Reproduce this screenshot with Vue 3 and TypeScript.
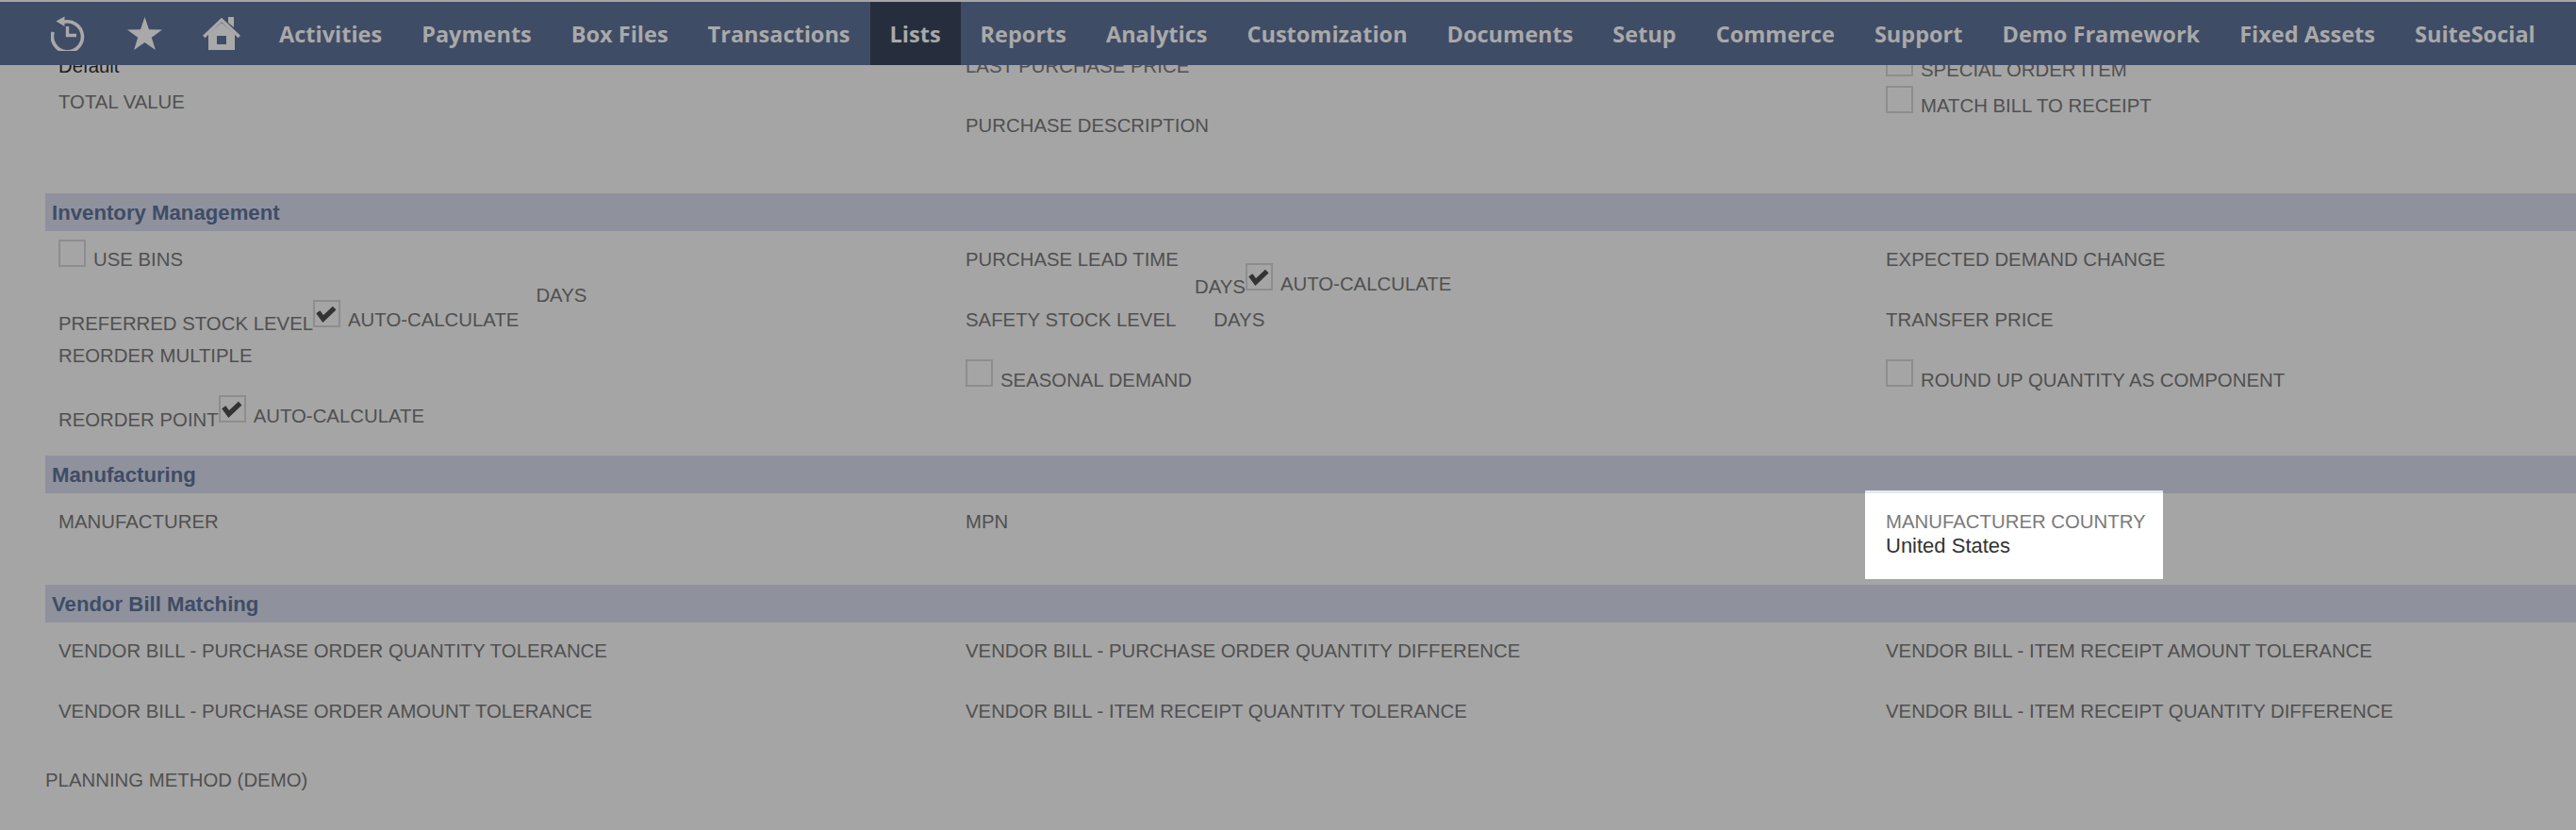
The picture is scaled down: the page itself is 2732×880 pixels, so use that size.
<script setup lang="ts">
const navItems: { label: string; active?: boolean }[] = [
  { label: 'Activities' }, { label: 'Payments' }, { label: 'Box Files' }, { label: 'Transactions' },
  { label: 'Lists', active: true }, { label: 'Reports' }, { label: 'Analytics' }, { label: 'Customization' },
  { label: 'Documents' }, { label: 'Setup' }, { label: 'Commerce' }, { label: 'Support' },
  { label: 'Demo Framework' }, { label: 'Fixed Assets' }, { label: 'SuiteSocial' },
]
</script>

<template>
  <div class="page">
    <header class="nav">
      <div class="icons">
        <svg class="ic clock" viewBox="0 0 36 37" width="36" height="37" fill="none" stroke="#a9a9a9">
          <path d="M13 6.5 A16 16 0 1 1 2.2 17" stroke-width="3.6" stroke-linecap="butt" />
          <path d="M14.5 0.5 L14.5 11 L5.5 5.5 Z" fill="#a9a9a9" stroke="none" />
          <path d="M17.5 11 V20.5 H27" stroke-width="3.4" />
        </svg>
        <svg class="ic star" viewBox="0 0 37 35" width="37" height="35">
          <path d="M18.5 0 L23 13.2 L37 13.4 L25.8 21.8 L29.9 35 L18.5 27 L7.1 35 L11.2 21.8 L0 13.4 L14 13.2 Z" fill="#a9a9a9" />
        </svg>
        <svg class="ic home" viewBox="0 0 40 36" width="40" height="36">
          <path fill="#a9a9a9" fill-rule="evenodd" d="M6 19 L20 7 L34 19 V36 H6 Z M15 21 V30 H25 V21 Z" />
          <path fill="none" stroke="#a9a9a9" stroke-width="3.4" d="M1.2 22 L20 4 L38.8 22" />
          <path fill="#a9a9a9" d="M27 1 H33 V12 L27 7 Z" />
        </svg>
      </div>
      <a v-for="item in navItems" :key="item.label" class="nav-item" :class="{ active: item.active }">{{ item.label }}</a>
    </header>

    <main class="content">
      <section class="grid top-block">
        <div class="col">
          <span class="value default-val">Default</span>
          <span class="lbl total">TOTAL VALUE</span>
        </div>
        <div class="col">
          <span class="lbl last-price">LAST PURCHASE PRICE</span>
          <span class="lbl purchase-desc">PURCHASE DESCRIPTION</span>
        </div>
        <div class="col">
          <div class="check-row special"><span class="cb"></span><span class="lbl after">SPECIAL ORDER ITEM</span></div>
          <div class="check-row match"><span class="cb"></span><span class="lbl after">MATCH BILL TO RECEIPT</span></div>
        </div>
      </section>

      <h2 class="band">Inventory Management</h2>
      <section class="grid inv-block">
        <div class="col">
          <div class="check-row use-bins"><span class="cb"></span><span class="lbl after">USE BINS</span></div>
          <div class="row pref">
            <span class="lbl low">PREFERRED STOCK LEVEL</span>
            <span class="cb mid"><svg viewBox="0 0 25 25" class="tick"><path d="M3.3 10.7 L8.7 18 L20.7 6.7" /></svg></span>
            <span class="lbl auto">AUTO-CALCULATE</span>
            <span class="lbl days-up">DAYS</span>
          </div>
          <span class="lbl multiple">REORDER MULTIPLE</span>
          <div class="row rpoint">
            <span class="lbl low2">REORDER POINT</span>
            <span class="cb"><svg viewBox="0 0 25 25" class="tick"><path d="M3.3 10.7 L8.7 18 L20.7 6.7" /></svg></span>
            <span class="lbl auto2">AUTO-CALCULATE</span>
          </div>
        </div>
        <div class="col">
          <span class="lbl lead">PURCHASE LEAD TIME</span>
          <div class="row lead-days">
            <span class="lbl days-low">DAYS</span>
            <span class="cb"><svg viewBox="0 0 25 25" class="tick"><path d="M3.3 10.7 L8.7 18 L20.7 6.7" /></svg></span>
            <span class="lbl auto3">AUTO-CALCULATE</span>
          </div>
          <div class="row safety">
            <span class="lbl">SAFETY STOCK LEVEL</span>
            <span class="lbl days-b">DAYS</span>
          </div>
          <div class="check-row seasonal"><span class="cb"></span><span class="lbl after">SEASONAL DEMAND</span></div>
        </div>
        <div class="col">
          <span class="lbl lead">EXPECTED DEMAND CHANGE</span>
          <span class="lbl transfer">TRANSFER PRICE</span>
          <div class="check-row round"><span class="cb"></span><span class="lbl after">ROUND UP QUANTITY AS COMPONENT</span></div>
        </div>
      </section>

      <h2 class="band">Manufacturing</h2>
      <section class="grid mfg-block">
        <div class="col"><span class="lbl first-in">MANUFACTURER</span></div>
        <div class="col"><span class="lbl first-in">MPN</span></div>
        <div class="col"></div>
      </section>

      <h2 class="band">Vendor Bill Matching</h2>
      <section class="grid vendor-block">
        <div class="col">
          <span class="lbl first-in">VENDOR BILL - PURCHASE ORDER QUANTITY TOLERANCE</span>
          <span class="lbl second-in">VENDOR BILL - PURCHASE ORDER AMOUNT TOLERANCE</span>
        </div>
        <div class="col">
          <span class="lbl first-in">VENDOR BILL - PURCHASE ORDER QUANTITY DIFFERENCE</span>
          <span class="lbl second-in">VENDOR BILL - ITEM RECEIPT QUANTITY TOLERANCE</span>
        </div>
        <div class="col">
          <span class="lbl first-in">VENDOR BILL - ITEM RECEIPT AMOUNT TOLERANCE</span>
          <span class="lbl second-in">VENDOR BILL - ITEM RECEIPT QUANTITY DIFFERENCE</span>
        </div>
      </section>

      <p class="lbl planning">PLANNING METHOD (DEMO)</p>
    </main>

    <aside class="spotlight">
      <span class="spot-lbl">MANUFACTURER COUNTRY</span>
      <span class="spot-val">United States</span>
    </aside>
  </div>
</template>

<style>
html, body { margin: 0; background: #a5a5a5; }
</style>

<style scoped>
.page {
  position: relative;
  width: 2732px;
  height: 880px;
  overflow: hidden;
  background: #a5a5a5;
  font-family: "Liberation Sans", Arial, sans-serif;
  font-size: 20.36px;
  line-height: 24px;
  color: #505050;
}
.nav {
  position: absolute;
  top: 2px;
  left: 0;
  right: 0;
  height: 67px;
  z-index: 2;
  display: flex;
  align-items: stretch;
  background: #3f4c66;
  font-family: "Open Sans", sans-serif;
  font-weight: 700;
  font-size: 23.5px;
  color: #a9a9a9;
}
.icons { width: 275px; flex: none; position: relative; display: flex; }
.ic { flex: none; margin-top: 15px; }
.clock { margin-left: 54px; }
.star { margin-left: 45px; margin-top: 16px; }
.home { margin-left: 43px; }
.nav-item {
  display: flex;
  align-items: center;
  padding: 0 21px;
  white-space: nowrap;
}
.nav-item.active { background: #262e3e; }
.content { display: flex; flex-direction: column; }
.grid {
  display: grid;
  grid-template-columns: 962px 976px 1fr;
  padding-left: 62px;
}
.col { display: flex; flex-direction: column; align-items: flex-start; }
.row, .check-row { display: flex; align-items: flex-start; white-space: nowrap; }
.lbl { display: block; white-space: nowrap; }
.after { margin-left: 8px; }
.band {
  margin: 0 0 0 48px;
  box-sizing: border-box;
  height: 40px;
  padding-left: 7px;
  background: #8f929c;
  color: #3f4c66;
  font-size: 22.2px;
  font-weight: 700;
  line-height: 41px;
}
.cb {
  box-sizing: border-box;
  flex: none;
  display: block;
  width: 29px;
  height: 29px;
  border: 2px solid #8d8d8d;
}
.tick { display: block; width: 25px; height: 25px; }
.tick path { fill: none; stroke: #333; stroke-width: 5.2; }

.top-block { height: 205px; }
.default-val { display: block; margin-top: 58px; color: #1c1c1c; }
.total { margin-top: 14px; }
.last-price { margin-top: 58px; }
.purchase-desc { margin-top: 39px; }
.special { margin-top: 52px; }
.special .after { margin-top: 10px; }
.match { margin-top: 5px; }
.match .after { margin-top: 9px; }

.inv-block { height: 238px; }
.use-bins { margin-top: 9px; }
.use-bins .after { margin-top: 9px; }
.pref { margin-top: 14px; }
.low { margin-top: 30px; }
.mid { margin-top: 17px; }
.auto { margin: 26px 0 0 8px; }
.days-up { margin-left: 18px; }
.multiple { margin-top: 10px; }
.rpoint { margin-top: 30px; }
.low2 { margin-top: 14px; }
.auto2 { margin: 10px 0 0 8px; }
.lead { margin-top: 18px; }
.lead-days { margin: -8px 0 0 243px; }
.days-low { margin-top: 13px; }
.auto3 { margin: 10px 0 0 8px; }
.safety { margin-top: 11px; }
.days-b { margin-left: 40px; }
.seasonal { margin-top: 30px; }
.seasonal .after, .round .after { margin-top: 10px; }
.transfer { margin-top: 40px; }
.round { margin-top: 30px; }

.mfg-block { height: 97px; }
.first-in { margin-top: 18px; }
.vendor-block { height: 127px; }
.second-in { margin-top: 40px; }
.planning { margin: 28px 0 0 48px; }

.spotlight {
  position: absolute;
  left: 1978px;
  top: 520px;
  box-sizing: border-box;
  width: 316px;
  height: 94px;
  padding: 18px 0 0 22px;
  display: flex;
  flex-direction: column;
  background: #fff;
  border-top: 3px solid #e4eaf3;
  z-index: 1;
}
.spot-lbl { color: #7a7a7a; }
.spot-val { color: #333; font-size: 22px; margin-top: 2px; }
</style>
